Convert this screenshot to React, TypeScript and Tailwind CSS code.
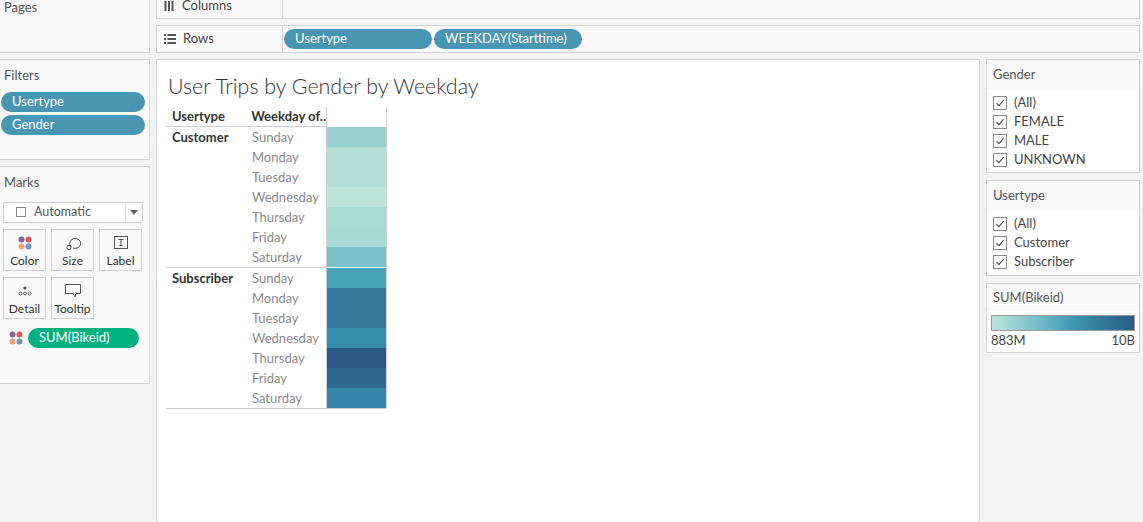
import { ReactNode } from "react";

const font = { fontFamily: "Lato, 'Open Sans', sans-serif" };

const customer = ["#97d0cf", "#b3dfd6", "#b3dfd6", "#bde5d9", "#a9dbd4", "#a6d9d3", "#7bc0c8"];
const subscriber = ["#45a2b9", "#357b9e", "#367a9e", "#348cab", "#2d5987", "#2f6890", "#3586a8"];
const days = ["Sunday", "Monday", "Tuesday", "Wednesday", "Thursday", "Friday", "Saturday"];

const Pill = ({ children, className = "" }: { children: ReactNode; className?: string }) => (
  <div className={`h-[20px] rounded-full bg-[#4996b2] text-white text-[13px] flex items-center px-[11px] ${className}`}>
    {children}
  </div>
);

const Check = ({ label }: { label: string }) => (
  <div className="flex items-center h-[19px] gap-[7px]">
    <div className="w-[14px] h-[14px] border border-[#8a8a8a] bg-white flex items-center justify-center">
      <svg width="10" height="10" viewBox="0 0 10 10">
        <path d="M1.5 5.2 L4 7.6 L8.6 2.2" fill="none" stroke="#555" strokeWidth="1.2" />
      </svg>
    </div>
    <span className="text-[13px] text-[#444]">{label}</span>
  </div>
);

const MarkButton = ({ icon, label }: { icon: ReactNode; label: string }) => (
  <div className="w-[43px] h-[42px] border border-[#d2d2d2] bg-[#f9f9f9] flex flex-col items-center pt-[5px]">
    <div className="h-[17px] flex items-center justify-center">{icon}</div>
    <span className="text-[12px] text-[#333] mt-[1px]">{label}</span>
  </div>
);

const ColorDots = () => (
  <svg width="14" height="14" viewBox="0 0 14 14">
    <circle cx="3.5" cy="3.5" r="3" fill="#7b6a9b" />
    <circle cx="10.5" cy="3.5" r="3" fill="#e15759" />
    <circle cx="3.5" cy="10.5" r="3" fill="#f1a07c" />
    <circle cx="10.5" cy="10.5" r="3" fill="#6f94c5" />
  </svg>
);

const Group = ({ name, colors, last }: { name: string; colors: string[]; last?: boolean }) => (
  <div className="flex">
    <div className="flex w-[160px] border-b border-[#cfcfcf]">
      <div className="w-[86px] pl-[6px] text-[13px] font-bold text-[#333] leading-[20px]">{name}</div>
      <div className="flex-1">
        {days.map((d) => (
          <div key={d} className="h-[20px] leading-[20px] text-[13px] text-[#8a8a8a]">{d}</div>
        ))}
      </div>
    </div>
    <div className={`w-[61px] border-l border-r border-[#cfcfcf] ${last ? "border-b" : ""}`}>
      {colors.map((c, i) => (
        <div key={i} className="h-[20px]" style={{ backgroundColor: c }} />
      ))}
    </div>
  </div>
);

export default function App() {
  return (
    <div className="w-[1143px] h-[522px] bg-[#f3f3f3] flex gap-[6px] overflow-hidden text-[#333]" style={font}>
      {/* Left column */}
      <div className="w-[150px] flex flex-col gap-[6px]">
        <div className="h-[53px] bg-[#f9f9f9] border-r border-b border-[#d4d4d4] px-[4px] text-[13px] text-[#555] leading-[14px]">
          Pages
        </div>
        <div className="h-[101px] bg-[#f9f9f9] border-r border-b border-t border-[#d4d4d4] pt-[6px]">
          <div className="px-[4px] text-[13px] text-[#555]">Filters</div>
          <div className="mt-[6px] flex flex-col gap-[3px] pl-[1px] pr-[4px]">
            <Pill>Usertype</Pill>
            <Pill>Gender</Pill>
          </div>
        </div>
        <div className="h-[218px] bg-[#f9f9f9] border-r border-b border-t border-[#d4d4d4] pt-[6px] px-[3px]">
          <div className="px-[1px] text-[13px] text-[#555]">Marks</div>
          <div className="mt-[9px] h-[21px] w-[140px] border border-[#cfcfcf] bg-white flex items-center">
            <div className="flex-1 flex items-center pl-[12px] gap-[8px]">
              <div className="w-[10px] h-[10px] border border-[#888]" />
              <span className="text-[12.5px] text-[#555]">Automatic</span>
            </div>
            <div className="w-[17px] h-full border-l border-[#ddd] flex items-center justify-center">
              <svg width="8" height="5" viewBox="0 0 8 5"><path d="M0 0 L8 0 L4 5 Z" fill="#666" /></svg>
            </div>
          </div>
          <div className="mt-[6px] grid grid-cols-[43px_43px_43px] gap-x-[5px] gap-y-[6px]">
            <MarkButton label="Color" icon={<ColorDots />} />
            <MarkButton
              label="Size"
              icon={
                <svg width="16" height="16" viewBox="0 0 16 16" fill="none" stroke="#555" strokeWidth="1">
                  <path d="M5.5 11 A5.5 5 0 1 1 8 13" />
                  <circle cx="4" cy="12.5" r="2.2" />
                </svg>
              }
            />
            <MarkButton
              label="Label"
              icon={
                <svg width="14" height="13" viewBox="0 0 14 13" fill="none" stroke="#555" strokeWidth="1">
                  <rect x="0.5" y="0.5" width="13" height="12" />
                  <path d="M4.5 3.5 H9.5 M7 3.5 V9.5 M5.5 9.5 H8.5" />
                </svg>
              }
            />
            <MarkButton
              label="Detail"
              icon={
                <svg width="14" height="12" viewBox="0 0 14 12">
                  <circle cx="7" cy="3" r="1.6" fill="#555" />
                  <circle cx="2.5" cy="8.5" r="1.5" fill="none" stroke="#555" strokeWidth="0.9" />
                  <circle cx="7" cy="8.5" r="1.5" fill="none" stroke="#555" strokeWidth="0.9" />
                  <circle cx="11.5" cy="8.5" r="1.5" fill="none" stroke="#555" strokeWidth="0.9" />
                </svg>
              }
            />
            <MarkButton
              label="Tooltip"
              icon={
                <svg width="16" height="14" viewBox="0 0 16 14" fill="none" stroke="#555" strokeWidth="1">
                  <path d="M0.5 0.5 H15.5 V9.5 H11 L10 13 L8 9.5 H0.5 Z" />
                </svg>
              }
            />
          </div>
          <div className="mt-[9px] flex items-center gap-[5px] pl-[6px]">
            <ColorDots />
            <div className="h-[20px] w-[111px] rounded-full bg-[#00b180] text-white text-[13px] flex items-center px-[11px]">
              SUM(Bikeid)
            </div>
          </div>
        </div>
      </div>

      {/* Main column */}
      <div className="w-[984px] flex flex-col gap-[6px]">
        <div className="h-[19px] bg-[#f9f9f9] border-r border-b border-l border-[#d4d4d4] flex">
          <div className="w-[126px] border-r border-[#d4d4d4] flex items-center pl-[7px] gap-[8px] -mt-[7px]">
            <svg width="10" height="10" viewBox="0 0 10 10" fill="#555">
              <rect x="0.5" y="0" width="2" height="10" />
              <rect x="4" y="0" width="2" height="10" />
              <rect x="7.5" y="0" width="2" height="10" />
            </svg>
            <span className="text-[13px] text-[#444]">Columns</span>
          </div>
        </div>
        <div className="h-[28px] bg-[#f9f9f9] border border-[#d4d4d4] flex">
          <div className="w-[126px] border-r border-[#d4d4d4] flex items-center pl-[7px] gap-[7px]">
            <svg width="12" height="10" viewBox="0 0 12 10" fill="#555">
              <rect x="0" y="0" width="2" height="2" />
              <rect x="3.5" y="0" width="8.5" height="2" />
              <rect x="0" y="4" width="2" height="2" />
              <rect x="3.5" y="4" width="8.5" height="2" />
              <rect x="0" y="8" width="2" height="2" />
              <rect x="3.5" y="8" width="8.5" height="2" />
            </svg>
            <span className="text-[13px] text-[#444]">Rows</span>
          </div>
          <div className="flex items-center gap-[2px] pl-[1px]">
            <Pill className="w-[148px]">Usertype</Pill>
            <Pill className="w-[148px]">WEEKDAY(Starttime)</Pill>
          </div>
        </div>

        <div className="flex-1 flex gap-[6px]">
          {/* Sheet */}
          <div className="w-[824px] bg-white border-l border-t border-r border-[#d4d4d4] pl-[9px] pt-[13px]">
            <div className="text-[21.4px] font-light text-[#333] leading-[26px] pl-[2px]">User Trips by Gender by Weekday</div>
            <div className="mt-[8px] w-[221px]">
              <div className="flex h-[20px]">
                <div className="flex w-[160px] border-b border-[#cfcfcf] items-end">
                  <div className="w-[86px] pl-[6px] text-[13px] font-bold text-[#333] leading-[19px]">Usertype</div>
                  <div className="flex-1 text-[13px] font-bold text-[#333] leading-[19px] whitespace-nowrap">Weekday of..</div>
                </div>
                <div className="w-[61px] border-l border-r border-[#cfcfcf]" />
              </div>
              <Group name="Customer" colors={customer} />
              <Group name="Subscriber" colors={subscriber} last />
            </div>
          </div>

          {/* Right panel */}
          <div className="w-[154px] flex flex-col gap-[7px]">
            <div className="h-[114px] border border-[#d4d4d4] bg-white">
              <div className="h-[29px] bg-[#f9f9f9] px-[6px] flex items-center text-[13px] text-[#555]">Gender</div>
              <div className="px-[6px] pt-[4px]">
                <Check label="(All)" />
                <Check label="FEMALE" />
                <Check label="MALE" />
                <Check label="UNKNOWN" />
              </div>
            </div>
            <div className="h-[96px] border border-[#d4d4d4] bg-white">
              <div className="h-[29px] bg-[#f9f9f9] px-[6px] flex items-center text-[13px] text-[#555]">Usertype</div>
              <div className="px-[6px] pt-[4px]">
                <Check label="(All)" />
                <Check label="Customer" />
                <Check label="Subscriber" />
              </div>
            </div>
            <div className="h-[70px] border border-[#d4d4d4] bg-white">
              <div className="h-[27px] bg-[#f9f9f9] px-[6px] flex items-center text-[13px] text-[#555]">SUM(Bikeid)</div>
              <div className="px-[4px] pt-[4px]">
                <div className="h-[16px] border border-[#9a9a9a] bg-[linear-gradient(to_right,#bde5d9,#7bc0c8_30%,#3a93b0_60%,#2c5a86)]" />
                <div className="flex justify-between text-[13px] text-[#444] leading-[16px] mt-[1px]">
                  <span>883M</span>
                  <span>10B</span>
                </div>
              </div>
            </div>
          </div>
        </div>
      </div>
    </div>
  );
}
